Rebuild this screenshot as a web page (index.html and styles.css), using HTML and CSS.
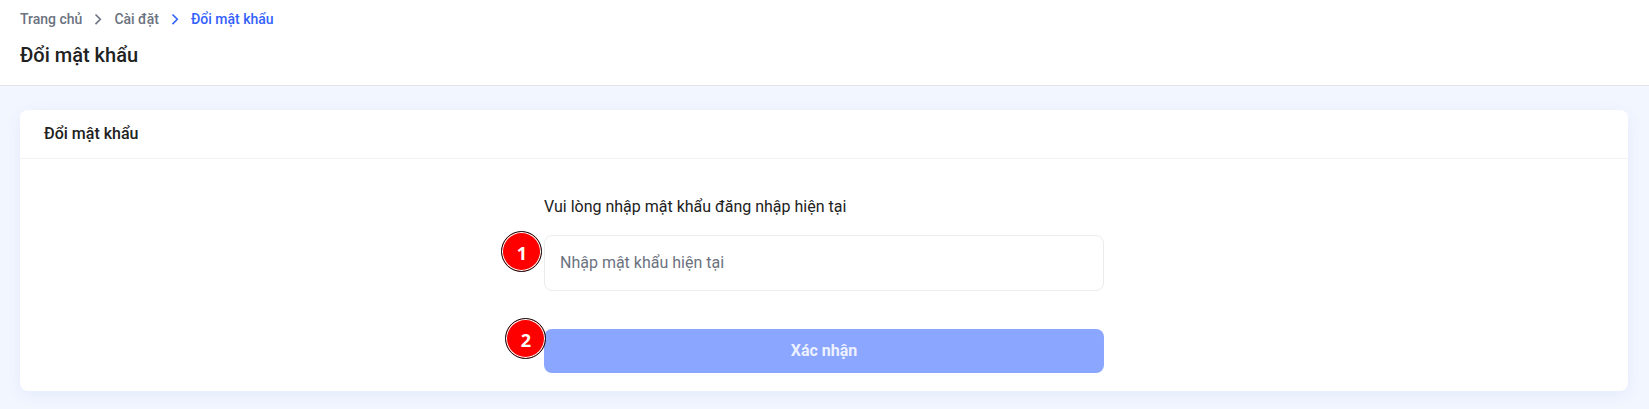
FILE: index.html
```html
<!DOCTYPE html>
<html lang="vi">
<head>
<meta charset="utf-8">
<title>Đổi mật khẩu</title>
<link rel="stylesheet" href="styles.css">
</head>
<body>
<header class="page-header">
  <nav class="breadcrumb">
    <span>Trang chủ</span>
    <svg class="chevron" viewBox="0 0 8 12"><path d="M1.5 1.5 6.3 6.3 1.5 11.1"/></svg>
    <span>Cài đặt</span>
    <svg class="chevron active" viewBox="0 0 8 12"><path d="M1.5 1.5 6.3 6.3 1.5 11.1"/></svg>
    <span class="active">Đổi mật khẩu</span>
  </nav>
  <h1 class="page-title">Đổi mật khẩu</h1>
</header>
<main class="content">
  <section class="card">
    <h2 class="card-title">Đổi mật khẩu</h2>
    <form class="form">
      <label class="label" for="current">Vui lòng nhập mật khẩu đăng nhập hiện tại</label>
      <div class="field">
        <input class="input" id="current" type="password" placeholder="Nhập mật khẩu hiện tại">
        <span class="marker marker-one">1</span>
      </div>
      <div class="field action">
        <button class="submit" type="button">Xác nhận</button>
        <span class="marker marker-two">2</span>
      </div>
    </form>
  </section>
</main>
</body>
</html>
```

FILE: styles.css
```css
* {
  box-sizing: border-box;
}

body {
  margin: 0;
  min-height: 409px;
  overflow: hidden;
  background: #f2f6ff;
  color: #212121;
  font-family: Roboto, sans-serif;
  font-size: 16px;
}

.page-header {
  height: 86px;
  padding: 9px 20px 0;
  background: #fff;
  border-bottom: 1px solid #e2e4ea;
}

.breadcrumb {
  display: flex;
  align-items: center;
  height: 20px;
  font-size: 14px;
  font-weight: 500;
  line-height: 20px;
  color: #6b7280;
}

.chevron {
  width: 8px;
  height: 12px;
  margin: 0 12px;
  fill: none;
  stroke: currentColor;
  stroke-width: 1.6;
}

.active {
  color: #3461fd;
}

.page-title {
  margin: 12px 0 0;
  font-size: 20px;
  font-weight: 500;
  line-height: 28px;
}

.content {
  padding: 24px 21px 18px 20px;
}

.card {
  height: 281px;
  background: #fff;
  border-radius: 8px;
  box-shadow: 0 4px 16px rgba(44, 92, 190, 0.07);
}

.card-title {
  height: 49px;
  margin: 0;
  padding: 0 24px;
  border-bottom: 1px solid #f1f2f4;
  font-size: 16px;
  font-weight: 500;
  line-height: 47px;
}

.form {
  width: 560px;
  margin: 0 auto;
  padding-top: 36px;
}

.label {
  display: block;
  margin-bottom: 16px;
  line-height: 24px;
}

.field {
  position: relative;
}

.action {
  margin-top: 38px;
}

.input {
  display: block;
  width: 100%;
  height: 56px;
  padding: 0 15px 2px;
  border: 1px solid #ececec;
  border-radius: 8px;
  background: #fff;
  font: inherit;
  outline: none;
}

.input::placeholder {
  color: #6b7280;
  opacity: 1;
}

.submit {
  display: block;
  width: 100%;
  height: 44px;
  padding: 0;
  border: 0;
  border-radius: 8px;
  background: #8aa6ff;
  color: #edf1ff;
  font: 700 16px/24px Roboto, sans-serif;
}

.marker {
  position: absolute;
  width: 41px;
  height: 41px;
  border: 1px solid #111;
  border-radius: 50%;
  background: #f00;
  box-shadow: inset 0 0 0 1px #fff;
  color: #fff;
  font: 700 18px/43px "Open Sans", sans-serif;
  text-align: center;
}

.marker-one {
  left: -42.6px;
  top: -4px;
}

.marker-two {
  left: -38.6px;
  top: -11px;
}
```
